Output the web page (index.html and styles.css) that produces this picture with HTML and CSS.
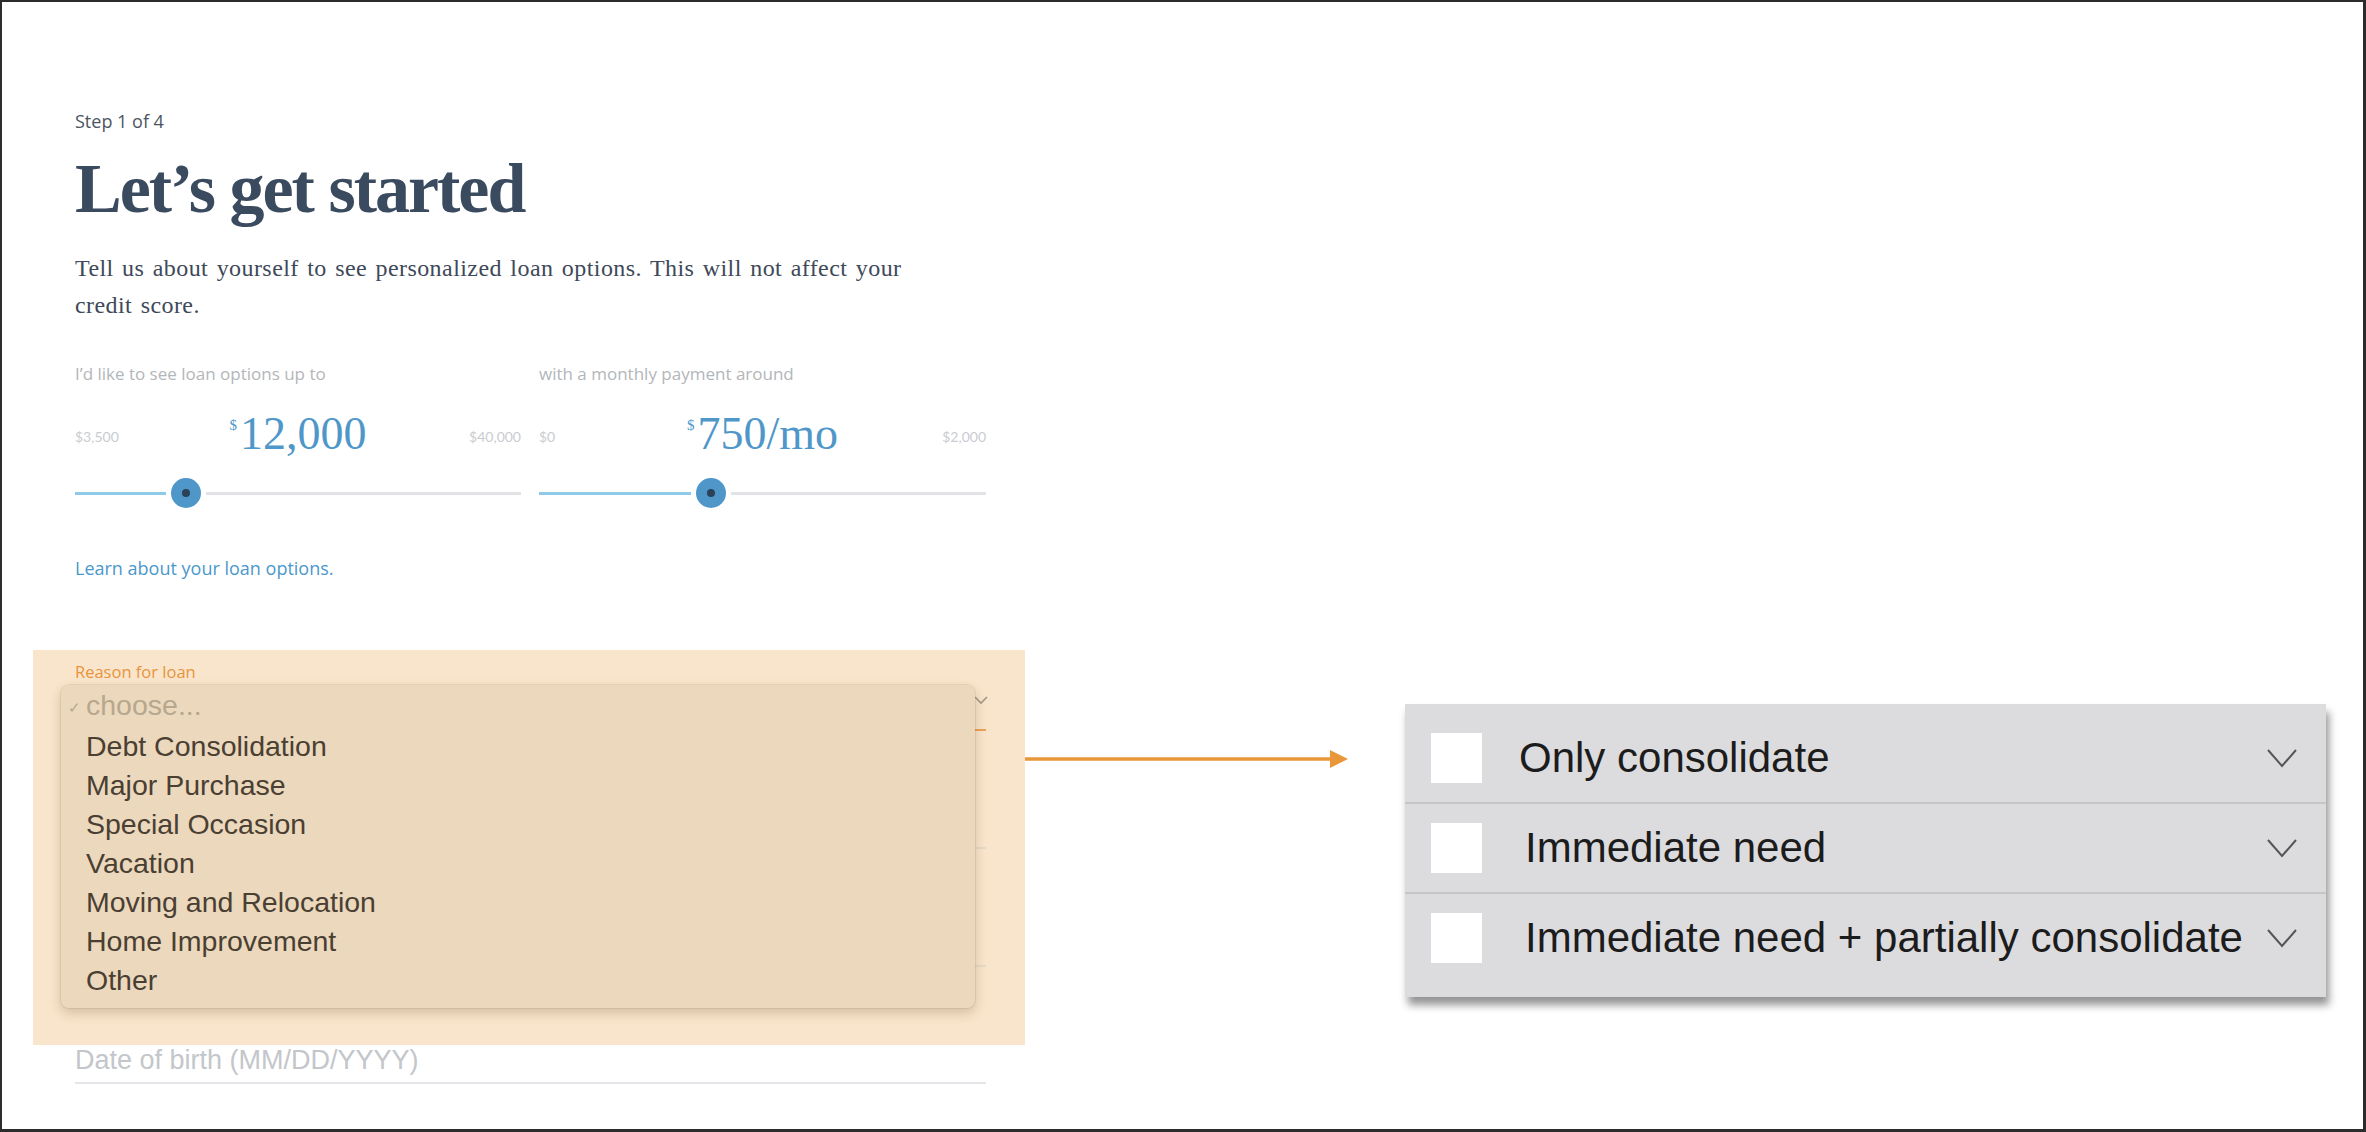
FILE: index.html
```html
<!DOCTYPE html>
<html lang="en">
<head>
<meta charset="utf-8">
<title>Let's get started</title>
<link rel="stylesheet" href="styles.css">
</head>
<body>
<div class="frame">
  <main class="form-col">
    <div class="step">Step 1 of 4</div>
    <h1 class="title">Let’s get started</h1>
    <p class="intro">Tell us about yourself to see personalized loan options. This will not affect your credit score.</p>

    <div class="sliders">
      <div class="slider">
        <div class="slider-label">I’d like to see loan options up to</div>
        <div class="slider-values">
          <span class="range-min">$3,500</span>
          <span class="amount"><span class="currency">$</span>12,000</span>
          <span class="range-max">$40,000</span>
        </div>
        <div class="track">
          <div class="track-fill" style="width:91px"></div>
          <div class="knob"><span class="knob-dot"></span></div>
          <div class="track-rest"></div>
        </div>
      </div>
      <div class="slider">
        <div class="slider-label">with a monthly payment around</div>
        <div class="slider-values">
          <span class="range-min">$0</span>
          <span class="amount"><span class="currency">$</span>750/mo</span>
          <span class="range-max">$2,000</span>
        </div>
        <div class="track">
          <div class="track-fill" style="width:152px"></div>
          <div class="knob"><span class="knob-dot"></span></div>
          <div class="track-rest"></div>
        </div>
      </div>
    </div>

    <a class="learn-link" href="#">Learn about your loan options.</a>

    <section class="highlight">
      <div class="field field--reason">
        <label class="field-label">Reason for loan</label>
        <div class="select-box">
          <svg class="select-chevron" width="14" height="9" viewBox="0 0 14 9"><polyline points="1,1 7,7 13,1" fill="none" stroke="#a39888" stroke-width="1.6"/></svg>
        </div>
      </div>
      <div class="field field--blank"></div>
      <div class="field field--blank"></div>

      <ul class="popup">
        <li class="opt opt--placeholder"><span class="check">✓</span>choose...</li>
        <li class="opt">Debt Consolidation</li>
        <li class="opt">Major Purchase</li>
        <li class="opt">Special Occasion</li>
        <li class="opt">Vacation</li>
        <li class="opt">Moving and Relocation</li>
        <li class="opt">Home Improvement</li>
        <li class="opt">Other</li>
      </ul>
    </section>

    <div class="field field--date">
      <span class="placeholder">Date of birth (MM/DD/YYYY)</span>
    </div>
  </main>

  <div class="arrow">
    <svg width="323" height="20" viewBox="0 0 323 20">
      <line x1="0" y1="10" x2="308" y2="10" stroke="#e9973b" stroke-width="3.5"/>
      <polygon points="305,1 323,10 305,19" fill="#e9973b"/>
    </svg>
  </div>

  <section class="panel">
    <div class="row">
      <span class="box"></span>
      <span class="row-text">Only consolidate</span>
      <svg class="chev" width="30" height="19" viewBox="0 0 30 19"><polyline points="1,1 15,17 29,1" fill="none" stroke="#555" stroke-width="2"/></svg>
    </div>
    <div class="row">
      <span class="box"></span>
      <span class="row-text row-text--shift">Immediate need</span>
      <svg class="chev" width="30" height="19" viewBox="0 0 30 19"><polyline points="1,1 15,17 29,1" fill="none" stroke="#555" stroke-width="2"/></svg>
    </div>
    <div class="row row--last">
      <span class="box"></span>
      <span class="row-text row-text--shift">Immediate need + partially consolidate</span>
      <svg class="chev" width="30" height="19" viewBox="0 0 30 19"><polyline points="1,1 15,17 29,1" fill="none" stroke="#555" stroke-width="2"/></svg>
    </div>
  </section>
</div>
</body>
</html>
```

FILE: styles.css
```css
* { box-sizing: border-box; }

html, body {
  margin: 0;
  padding: 0;
  background: #fff;
}

.frame {
  width: 2366px;
  height: 1132px;
  border: 2px solid #2c2c2c;
  border-right-width: 3px;
  border-bottom-width: 3px;
  display: flex;
  align-items: flex-start;
  overflow: hidden;
  background: #fff;
}

/* ---------- left form column ---------- */
.form-col {
  margin-left: 73px;
  width: 911px;
  flex: none;
  padding-top: 109px;
  font-family: "Open Sans", Lato, sans-serif;
}

.step {
  font-size: 18px;
  line-height: 20px;
  color: #4b5561;
}

.title {
  margin: 18px 0 0;
  font-family: "Liberation Serif", serif;
  font-weight: 700;
  font-size: 70px;
  line-height: 80px;
  letter-spacing: -2px;
  color: #3a4a5f;
}

.intro {
  margin: 21px 0 0;
  max-width: 860px;
  font-family: "Liberation Serif", serif;
  font-size: 24px;
  line-height: 37px;
  letter-spacing: 0.43px;
  word-spacing: 2px;
  color: #3e4959;
}

.sliders {
  margin-top: 40px;
  display: grid;
  grid-template-columns: 446px 447px;
  column-gap: 18px;
}

.slider-label {
  font-size: 17px;
  line-height: 20px;
  color: #b3b6ba;
}

.slider-values {
  margin-top: 25px;
  height: 50px;
  display: grid;
  grid-template-columns: 1fr auto 1fr;
  align-items: start;
}

.range-min,
.range-max {
  margin-top: 19px;
  font-family: Lato, sans-serif;
  font-size: 14px;
  line-height: 18px;
  color: #c9ccd0;
}

.range-min { justify-self: start; }
.range-max { justify-self: end; }

.amount {
  font-family: "Liberation Serif", serif;
  font-size: 46px;
  line-height: 50px;
  color: #4f97c9;
  white-space: nowrap;
}

.currency {
  display: inline-block;
  vertical-align: top;
  font-size: 15px;
  line-height: 32px;
  margin-right: 3px;
}

.track {
  margin-top: 19px;
  height: 30px;
  display: flex;
  align-items: center;
}

.track-fill {
  height: 3px;
  background: #8dcbe8;
  flex: none;
}

.knob {
  width: 30px;
  height: 30px;
  margin: 0 5px;
  border-radius: 50%;
  background: #4f97c9;
  display: flex;
  align-items: center;
  justify-content: center;
  flex: none;
}

.knob-dot {
  width: 8px;
  height: 8px;
  border-radius: 50%;
  background: #2b4157;
}

.track-rest {
  flex: 1;
  height: 3px;
  background: #e2e3e7;
}

.learn-link {
  display: block;
  margin-top: 49px;
  font-size: 18px;
  line-height: 22px;
  color: #4a98cc;
  text-decoration: none;
}

/* ---------- highlighted area ---------- */
.highlight {
  position: relative;
  margin: 71px -39px 0 -42px;
  padding: 14px 39px 0 42px;
  height: 395px;
  background: #f9e5cb;
}

.field-label {
  display: block;
  font-size: 16.5px;
  line-height: 16px;
  color: #e8943d;
}

.select-box {
  height: 51px;
  border-bottom: 2px solid #eba35a;
  display: flex;
  justify-content: flex-end;
  align-items: flex-start;
  padding-top: 16px;
}

.select-chevron {
  margin-right: -2px;
}

.field--blank {
  height: 118px;
  border-bottom: 2px solid #e6dac8;
}

.popup {
  position: absolute;
  left: 28px;
  top: 35px;
  width: 914px;
  height: 323px;
  margin: 0;
  padding: 1px 0 0;
  list-style: none;
  background: #ecd8bc;
  border-radius: 8px;
  box-shadow: 0 0 0 1px rgba(120, 90, 50, 0.10), 0 5px 12px rgba(80, 50, 20, 0.22);
  font-family: "Liberation Sans", Arial, sans-serif;
}

.opt {
  padding-left: 25px;
  font-size: 28.5px;
  line-height: 39px;
  color: #4a3f33;
  white-space: nowrap;
}

.opt--placeholder {
  padding-left: 7px;
  color: #b6a78f;
}

.check {
  display: inline-block;
  width: 18px;
  font-size: 15px;
  vertical-align: 2px;
}

.field--date {
  padding: 0 0 7px;
  border-bottom: 2px solid #e3e5e8;
}

.placeholder {
  display: block;
  font-family: "Liberation Sans", Arial, sans-serif;
  font-size: 27px;
  line-height: 30px;
  color: #c3c6ca;
}

/* ---------- arrow ---------- */
.arrow {
  flex: none;
  margin-left: 39px;
  margin-top: 747px;
  height: 20px;
}

.arrow svg { display: block; }

/* ---------- right panel ---------- */
.panel {
  flex: none;
  margin-left: 57px;
  margin-top: 702px;
  width: 921px;
  padding: 10px 0 15px;
  background: #dcdcdf;
  box-shadow: 3px 8px 8px rgba(0, 0, 0, 0.42);
  font-family: "Liberation Sans", Arial, sans-serif;
}

.row {
  height: 90px;
  display: flex;
  align-items: center;
  padding: 0 29px 0 26px;
  border-bottom: 2px solid #c6c6c9;
}

.row--last {
  height: 88px;
  border-bottom: none;
}

.box {
  width: 51px;
  height: 50px;
  background: #fff;
  flex: none;
}

.row-text {
  flex: 1;
  margin-left: 37px;
  font-size: 42px;
  line-height: 48px;
  color: #1c1c1c;
  white-space: nowrap;
}

.row-text--shift {
  margin-left: 43px;
}

.chev {
  flex: none;
  display: block;
}
```
